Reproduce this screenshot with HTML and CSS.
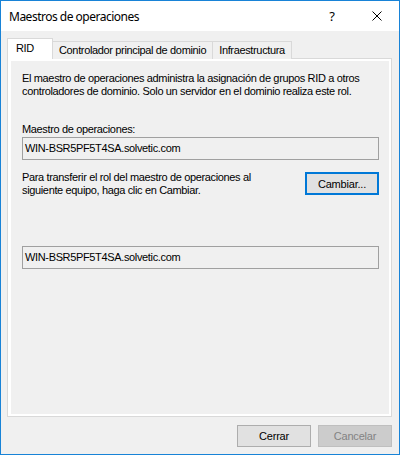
FILE: index.html
```html
<!DOCTYPE html>
<html lang="es">
<head>
<meta charset="utf-8">
<title>Maestros de operaciones</title>
<link rel="stylesheet" href="styles.css">
</head>
<body>
<div class="window">
  <div class="titlebar">
    <span class="title">Maestros de operaciones</span>
    <span class="help">?</span>
    <span class="close">
      <svg width="10" height="10" viewBox="0 0 10 10"><path d="M0.5 0.5 L9.5 9.5 M9.5 0.5 L0.5 9.5" stroke="#000" stroke-width="1" fill="none"/></svg>
    </span>
  </div>
  <div class="client">
    <div class="tabs">
      <div class="tab active">RID</div>
      <div class="tab">Controlador principal de dominio</div>
      <div class="tab">Infraestructura</div>
    </div>
    <div class="panel">
      <div class="page">
        <p class="desc">El maestro de operaciones administra la asignación de grupos RID a otros controladores de dominio. Solo un servidor en el dominio realiza este rol.</p>
        <div class="label">Maestro de operaciones:</div>
        <div class="field">WIN-BSR5PF5T4SA.solvetic.com</div>
        <div class="transfer">
          <div class="transfer-text">Para transferir el rol del maestro de operaciones al siguiente equipo, haga clic en Cambiar.</div>
          <button class="btn focused">Cambiar...</button>
        </div>
        <div class="field second">WIN-BSR5PF5T4SA.solvetic.com</div>
      </div>
    </div>
    <div class="footer">
      <button class="btn">Cerrar</button>
      <button class="btn disabled">Cancelar</button>
    </div>
  </div>
</div>
</body>
</html>
```
FILE: styles.css
```css
html, body {
  margin: 0;
  padding: 0;
}
body {
  width: 400px;
  height: 455px;
  overflow: hidden;
  font-family: "Liberation Sans", Arial, sans-serif;
  font-size: 11px;
  letter-spacing: -0.35px;
  color: #000;
}
.window {
  width: 400px;
  height: 455px;
  box-sizing: border-box;
  border: 1px solid #1883d7;
  background: #f0f0f0;
  display: flex;
  flex-direction: column;
}
.titlebar {
  height: 30px;
  background: #fff;
  display: flex;
  align-items: center;
  flex: none;
}
.title {
  font-family: "Noto Sans", "Open Sans", sans-serif;
  font-size: 12px;
  letter-spacing: -0.5px;
  margin-left: 8px;
  flex: 1;
}
.help {
  font-family: "Noto Sans", sans-serif;
  font-size: 13px;
  letter-spacing: 0;
  width: 12px;
  text-align: center;
  margin-right: 34px;
}
.close {
  width: 10px;
  height: 10px;
  display: flex;
  margin-right: 17px;
}
.close svg { display: block; }
.client {
  flex: 1;
  display: flex;
  flex-direction: column;
  padding: 7px 7px 0 6px;
}
.tabs {
  display: flex;
  align-items: flex-end;
  height: 21px;
  position: relative;
  z-index: 1;
  margin-bottom: -1px;
}
.tab {
  box-sizing: border-box;
  height: 18px;
  border: 1px solid #d9d9d9;
  border-bottom: none;
  background: #f0f0f0;
  line-height: 17px;
  padding: 0 6px;
  margin-left: -1px;
  white-space: nowrap;
}
.tab.active {
  height: 21px;
  background: #fff;
  margin-left: 0;
  padding: 0 8px;
  line-height: 18px;
  width: 46px;
  z-index: 2;
  position: relative;
}
.panel {
  box-sizing: border-box;
  height: 359px;
  border: 1px solid #d9d9d9;
  background: #fff;
  padding: 2px 2px 2px 3px;
  display: flex;
}
.page {
  flex: 1;
  background: #f0f0f0;
  padding: 11px 10px 0 11px;
  display: flex;
  flex-direction: column;
}
.desc {
  margin: 0;
  line-height: 13px;
}
.label {
  margin-top: 25px;
  line-height: 13px;
}
.field {
  margin-top: 1px;
  box-sizing: border-box;
  height: 23px;
  border: 1px solid #a0a0a0;
  line-height: 21px;
  padding-left: 2px;
  white-space: nowrap;
}
.transfer {
  margin-top: 11px;
  display: flex;
  align-items: flex-start;
  justify-content: space-between;
}
.transfer-text {
  width: 250px;
  line-height: 13px;
}
.btn {
  font-family: "Liberation Sans", Arial, sans-serif;
  font-size: 11px;
  letter-spacing: -0.2px;
  color: #000;
  width: 74px;
  height: 22px;
  box-sizing: border-box;
  border: 1px solid #adadad;
  background: #e1e1e1;
  padding: 0;
  margin: 0;
}
.btn.focused {
  border: 2px solid #0078d7;
  margin-top: 1px;
  width: 74px;
  height: 23px;
}
.btn.disabled {
  background: #cccccc;
  border-color: #bfbfbf;
  color: #838383;
}
.field.second {
  margin-top: 49px;
}
.footer {
  display: flex;
  justify-content: flex-end;
  gap: 7px;
  margin-top: 8px;
}
```
